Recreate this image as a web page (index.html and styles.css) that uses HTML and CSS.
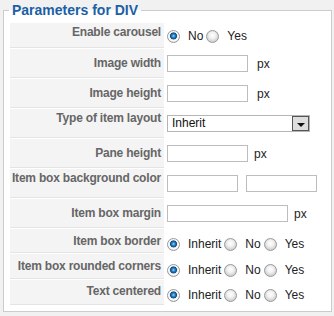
FILE: index.html
```html
<!DOCTYPE html>
<html lang="en">
<head>
    <meta charset="UTF-8">
    <meta name="viewport" content="width=device-width, initial-scale=1.0">
    <title>Parameters for DIV</title>
    <link rel="stylesheet" href="styles.css">
</head>
<body>
    <fieldset class="params">
        <legend>Parameters for DIV</legend>
        <table class="paramlist">
            <tr class="row-first">
                <td class="key">Enable carousel</td>
                <td class="value">
                    <div class="opts radios">
                        <input type="radio" name="carousel" id="carousel0" checked><label for="carousel0">No</label>
                        <input type="radio" name="carousel" id="carousel1"><label for="carousel1">Yes</label>
                    </div>
                </td>
            </tr>
            <tr class="row-input">
                <td class="key">Image width</td>
                <td class="value">
                    <div class="opts">
                        <input type="text" class="text-small"><span class="unit">px</span>
                    </div>
                </td>
            </tr>
            <tr class="row-input">
                <td class="key">Image height</td>
                <td class="value">
                    <div class="opts">
                        <input type="text" class="text-small"><span class="unit">px</span>
                    </div>
                </td>
            </tr>
            <tr class="row-top">
                <td class="key">Type of item layout</td>
                <td class="value">
                    <div class="select">
                        <select>
                            <option>Inherit</option>
                        </select>
                        <span class="arrow"></span>
                    </div>
                </td>
            </tr>
            <tr class="row-input">
                <td class="key">Pane height</td>
                <td class="value">
                    <div class="opts">
                        <input type="text" class="text-small"><span class="unit near">px</span>
                    </div>
                </td>
            </tr>
            <tr class="row-top">
                <td class="key">Item box background color</td>
                <td class="value">
                    <div class="opts pair">
                        <input type="text" class="text-color">
                        <input type="text" class="text-color">
                    </div>
                </td>
            </tr>
            <tr class="row-input">
                <td class="key">Item box margin</td>
                <td class="value">
                    <div class="opts">
                        <input type="text" class="text-wide"><span class="unit near">px</span>
                    </div>
                </td>
            </tr>
            <tr class="row-radio row-short">
                <td class="key">Item box border</td>
                <td class="value">
                    <div class="opts radios">
                        <input type="radio" name="border" id="border0" checked><label for="border0">Inherit</label>
                        <input type="radio" name="border" id="border1"><label for="border1">No</label>
                        <input type="radio" name="border" id="border2"><label for="border2">Yes</label>
                    </div>
                </td>
            </tr>
            <tr class="row-radio">
                <td class="key">Item box rounded corners</td>
                <td class="value">
                    <div class="opts radios">
                        <input type="radio" name="rounded" id="rounded0" checked><label for="rounded0">Inherit</label>
                        <input type="radio" name="rounded" id="rounded1"><label for="rounded1">No</label>
                        <input type="radio" name="rounded" id="rounded2"><label for="rounded2">Yes</label>
                    </div>
                </td>
            </tr>
            <tr class="row-radio row-last">
                <td class="key">Text centered</td>
                <td class="value">
                    <div class="opts radios">
                        <input type="radio" name="centered" id="centered0" checked><label for="centered0">Inherit</label>
                        <input type="radio" name="centered" id="centered1"><label for="centered1">No</label>
                        <input type="radio" name="centered" id="centered2"><label for="centered2">Yes</label>
                    </div>
                </td>
            </tr>
        </table>
    </fieldset>
</body>
</html>
```

FILE: styles.css
```css
body {
    margin: 0;
    background-color: #f1f1f1;
    font-family: "Liberation Sans", Arial, sans-serif;
    font-size: 12px;
    color: #222;
}
.params {
    margin: 1px 2px 0 3px;
    padding: 3px 5px 5px 5px;
    border: 1px solid #cccccc;
    background: white;
    min-width: 0;
}
.params legend {
    padding: 0 3px;
    font-size: 14px;
    line-height: 18px;
    font-weight: bold;
    color: #1b5fa5;
}
.paramlist {
    width: 316px;
    table-layout: fixed;
    border-collapse: separate;
    border-spacing: 1px;
}
.paramlist td {
    box-sizing: border-box;
    padding: 0;
    vertical-align: top;
    line-height: 14px;
}
.paramlist tr {
    height: 29px;
}
.paramlist .key {
    width: 154px;
    padding-right: 3px;
    text-align: right;
    font-weight: bold;
    letter-spacing: -0.2px;
    color: #666;
    background-color: #f4f4f4;
    border-bottom: 1px solid #e4e4e4;
    white-space: nowrap;
}
.paramlist .value {
    padding-left: 2px;
}
.paramlist .row-first { height: 25px; }
.row-first .key { padding-top: 2px; }
.row-first .value { padding-top: 6px; }
.row-input .key { padding-top: 7px; }
.row-input .value { padding-top: 6px; }
.row-top .key { padding-top: 2px; }
.row-top .value { padding-top: 6px; }
.paramlist .row-radio { height: 25px; }
.paramlist .row-short { height: 24px; }
.row-radio .key { padding-top: 5px; }
.row-radio .value { padding-top: 9px; }
.row-short .value { padding-top: 8px; }
.row-last .key { padding-top: 4px; }
.row-last .value { padding-top: 8px; }

.opts {
    display: flex;
    align-items: center;
    height: 17px;
}
.opts.radios {
    height: 14px;
}
.opts label {
    margin: 0 3px 0 8px;
}
.opts.pair {
    gap: 8px;
}
.unit {
    margin-left: 9px;
}
.unit.near {
    margin-left: 6px;
}
input[type="text"] {
    box-sizing: border-box;
    height: 17px;
    margin: 0;
    padding: 1px 3px;
    border: 1px solid #bdbdbd;
    background: white;
    font: inherit;
}
.text-small { width: 81px; }
.text-color { width: 71px; }
.text-wide { width: 121px; }

input[type="radio"] {
    appearance: none;
    box-sizing: border-box;
    width: 13px;
    height: 13px;
    margin: 0;
    border: 1px solid #999;
    border-radius: 50%;
    background: radial-gradient(circle at 50% 40%, #ffffff 0, #f2f2f2 3px, #d2d2d2 6px);
    flex: none;
}
input[type="radio"]:checked {
    background: radial-gradient(circle at 50% 45%, #9bd6ff 0, #2f86c9 1.5px, #0b4a80 3.2px, #e8e8e8 3.8px, #ffffff 5px, #dcdcdc 6px);
}

.select {
    display: flex;
    box-sizing: border-box;
    width: 143px;
    height: 17px;
    border: 1px solid #b5b5b5;
    background: white;
}
.select select {
    appearance: none;
    flex: 1;
    min-width: 0;
    margin: 0;
    padding: 0 0 0 4px;
    border: none;
    background: transparent;
    font: inherit;
    color: #111;
    line-height: 15px;
}
.arrow {
    display: flex;
    align-items: center;
    justify-content: center;
    box-sizing: border-box;
    width: 17px;
    height: 15px;
    border: 1px solid #555;
    background: #dedede;
}
.arrow::after {
    content: "";
    margin-top: 3px;
    border-left: 4px solid transparent;
    border-right: 4px solid transparent;
    border-top: 4px solid #111;
}
```
